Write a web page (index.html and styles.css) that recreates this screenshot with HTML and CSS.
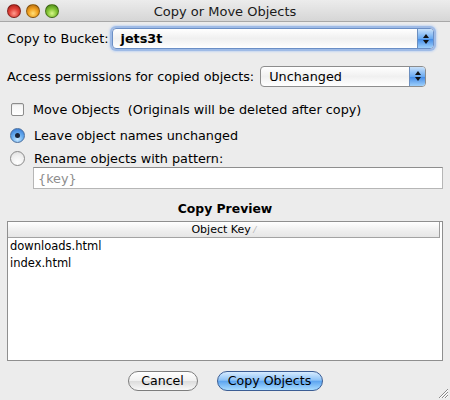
FILE: index.html
```html
<!DOCTYPE html>
<html>
<head>
<meta charset="utf-8">
<link rel="stylesheet" href="styles.css">
</head>
<body>
<div class="window">
  <div class="titlebar">
    <div class="lights">
      <span class="light red"></span>
      <span class="light yellow"></span>
      <span class="light green"></span>
    </div>
    <div class="title">Copy or Move Objects</div>
  </div>
  <div class="content">
    <div class="row row-bucket">
      <span class="label">Copy to Bucket:</span>
      <div class="select select-wide focused">
        <span class="select-text bold">jets3t</span>
        <span class="stepper"><svg width="8" height="12" viewBox="0 0 8 12"><path d="M4 1 L7 5 L1 5 Z M4 11 L7 7 L1 7 Z" fill="#111"/></svg></span>
      </div>
    </div>
    <div class="row row-access">
      <span class="label">Access permissions for copied objects:</span>
      <div class="select select-narrow">
        <span class="select-text">Unchanged</span>
        <span class="stepper"><svg width="8" height="12" viewBox="0 0 8 12"><path d="M4 1 L7 5 L1 5 Z M4 11 L7 7 L1 7 Z" fill="#111"/></svg></span>
      </div>
    </div>
    <div class="row option row-check">
      <span class="checkbox"></span>
      <span class="label">Move Objects&nbsp; (Originals will be deleted after copy)</span>
    </div>
    <div class="row option row-radio1">
      <span class="radio checked"><span class="dot"></span></span>
      <span class="label">Leave object names unchanged</span>
    </div>
    <div class="row option row-radio2">
      <span class="radio"></span>
      <span class="label">Rename objects with pattern:</span>
    </div>
    <div class="textfield"><span class="placeholder">{key}</span></div>
    <div class="heading">Copy Preview</div>
    <div class="table">
      <div class="thead">
        <div class="th">Object Key <span class="sort">&#8260;</span></div>
      </div>
      <div class="tbody">
        <div class="tr">downloads.html</div>
        <div class="tr">index.html</div>
      </div>
    </div>
    <div class="buttons">
      <button class="btn">Cancel</button>
      <button class="btn default">Copy Objects</button>
    </div>
  </div>
  <svg class="grip" width="12" height="12" viewBox="0 0 12 12">
    <path d="M11 2 L2 11 M11 5 L5 11 M11 8 L8 11" stroke="#8a8a8a" stroke-width="1"/>
    <path d="M11 3 L3 11 M11 6 L6 11 M11 9 L9 11" stroke="#ffffff" stroke-width="1"/>
  </svg>
</div>
</body>
</html>
```
FILE: styles.css
```css
* { box-sizing: border-box; }
html, body { margin: 0; padding: 0; }
body {
  font-family: "DejaVu Sans", "Liberation Sans", sans-serif;
  font-size: 12.8px;
  color: #000;
  background: #ececec;
}
.window {
  position: relative;
  width: 450px;
  height: 400px;
  background: #ececec;
  overflow: hidden;
}
.titlebar {
  position: relative;
  height: 22px;
  background: linear-gradient(#ececec, #d6d6d6);
  border-bottom: 1px solid #a8a8a8;
  display: flex;
  align-items: center;
  justify-content: center;
}
.lights {
  position: absolute;
  left: 7px;
  top: 4px;
  display: flex;
  gap: 5px;
}
.light {
  width: 14px;
  height: 14px;
  border-radius: 50%;
  display: block;
  border: 1px solid rgba(0,0,0,0.35);
}
.red { background: radial-gradient(circle at 50% 70%, #ff9d8f 0%, #e3433a 45%, #9e1610 100%); }
.yellow { background: radial-gradient(circle at 50% 70%, #ffe07a 0%, #f2a220 45%, #a55b06 100%); }
.green { background: radial-gradient(circle at 50% 70%, #d8f78a 0%, #84c535 45%, #3d7a10 100%); }
.title {
  font-size: 13px;
  color: #1a1a1a;
  padding-top: 1px;
}
.content {
  padding: 4px 7px 0 7px;
  display: flex;
  flex-direction: column;
}
.row {
  display: flex;
  align-items: center;
}
.row-bucket { height: 23px; margin-top: 1px; }
.row-bucket .label { margin-right: 3px; }
.select {
  height: 21px;
  border: 1px solid #8d8d8d;
  border-radius: 4px;
  background: linear-gradient(#ffffff, #f0f0f0 50%, #ffffff);
  display: flex;
  align-items: center;
  justify-content: space-between;
  overflow: hidden;
}
.select-wide { flex: 1; margin-right: 9px; }
.select.focused {
  border-color: #6b8fc6;
  box-shadow: 0 0 0 2px #9fbbe6, 0 0 2px 3px #c6d7f1;
}
.select-narrow { width: 166px; margin-left: 6px; }
.select-text { padding-left: 8px; }
.bold { font-weight: bold; }
.stepper {
  width: 16px;
  height: 100%;
  background: linear-gradient(#c9e1fa, #6aaaf1 50%, #3f88e6 51%, #9fd0fb);
  border-left: 1px solid #6c8fbf;
  display: flex;
  align-items: center;
  justify-content: center;
}
.row-access { height: 22px; margin-top: 15px; }
.option .label { margin-left: 9px; }
.row-check { height: 16px; margin-top: 14px; padding-left: 4px; }
.checkbox {
  width: 13px;
  height: 13px;
  border: 1px solid #8c8c8c;
  border-radius: 2px;
  background: linear-gradient(#f4f4f4, #ffffff);
  box-shadow: inset 0 1px 1px rgba(0,0,0,0.1);
}
.row-radio1 { height: 16px; margin-top: 10px; padding-left: 3px; }
.row-radio2 { height: 16px; margin-top: 7px; padding-left: 3px; }
.radio {
  width: 15px;
  height: 15px;
  border-radius: 50%;
  border: 1px solid #8a8a8a;
  background: radial-gradient(circle at 50% 80%, #ffffff, #eeeeee 60%, #d8d8d8);
  display: flex;
  align-items: center;
  justify-content: center;
}
.radio.checked {
  border-color: #4a6f9e;
  background: radial-gradient(circle at 50% 80%, #c7e7ff 0%, #69aef0 45%, #2c6fcf 100%);
}
.radio .dot {
  width: 5px;
  height: 5px;
  border-radius: 50%;
  background: #1a2438;
}
.textfield {
  margin-left: 26px;
  margin-top: 1px;
  height: 22px;
  background: #fff;
  border: 1px solid #b6b6b6;
  border-top-color: #8e8e8e;
  display: flex;
  align-items: center;
}
.placeholder { color: #8d8d8d; padding-left: 4px; }
.heading {
  text-align: center;
  font-weight: bold;
  font-size: 12.4px;
  margin-top: 12px;
  height: 15px;
  line-height: 15px;
}
.table {
  margin-top: 5px;
  height: 140px;
  border: 1px solid #8f8f8f;
  background: #fff;
  display: flex;
  flex-direction: column;
}
.thead {
  height: 16px;
  border-bottom: 1px solid #a3a3a3;
  background: linear-gradient(#ffffff, #eeeeee 60%, #e6e6e6);
  margin-right: 2px;
  border-right: 1px solid #9c9c9c;
}
.th {
  text-align: center;
  font-size: 11px;
  line-height: 15px;
}
.sort { color: #aaa; font-size: 8px; }
.tbody { padding-top: 0; padding-left: 2px; }
.tr {
  height: 17px;
  line-height: 17px;
  font-size: 11.5px;
}
.buttons {
  display: flex;
  justify-content: center;
  gap: 19px;
  margin-top: 10px;
}
.btn {
  font-family: "DejaVu Sans", "Liberation Sans", sans-serif;
  font-size: 12.6px;
  height: 20px;
  border-radius: 10px;
  padding: 0;
  color: #000;
  border: 1px solid #7d7d7d;
  background: linear-gradient(#ffffff, #f0f0f0 50%, #dcdcdc 51%, #f8f8f8);
  line-height: 18px;
  width: 70px;
}
.btn.default {
  width: 106px;
  border-color: #3b5d94;
  background: linear-gradient(#d6ebff, #8ec3f7 45%, #5ea5f0 52%, #a8dcff);
}
.grip {
  position: absolute;
  right: 1px;
  bottom: 1px;
}
```
